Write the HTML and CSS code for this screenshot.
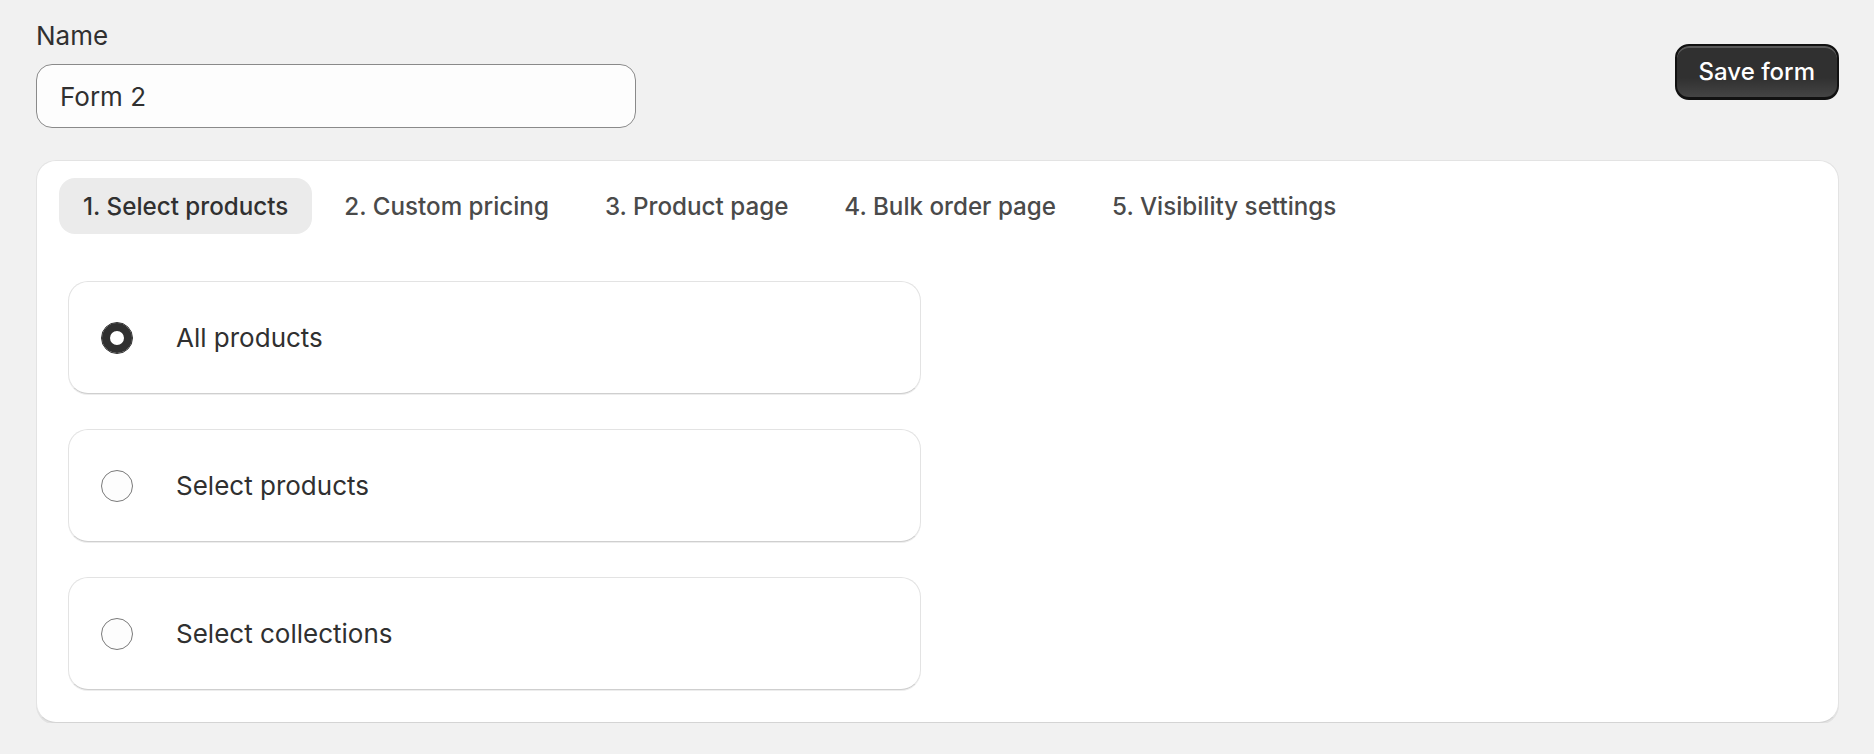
FILE: index.html
```html
<!DOCTYPE html>
<html lang="en">
<head>
  <meta charset="UTF-8" />
  <meta name="viewport" content="width=device-width, initial-scale=1.0"/>
  <title>Form 2</title>
  <link rel="stylesheet" href="styles.css">
</head>
<body>
  <div class="page">
    <header class="form-header">
      <div class="name-field">
        <label class="field-label" for="form-name">Name</label>
        <input type="text" id="form-name" class="text-input" value="Form 2" />
      </div>
      <button class="btn-primary">Save form</button>
    </header>

    <section class="card">
      <nav class="tabs">
        <button class="tab tab-active">1. Select products</button>
        <button class="tab">2. Custom pricing</button>
        <button class="tab">3. Product page</button>
        <button class="tab">4. Bulk order page</button>
        <button class="tab">5. Visibility settings</button>
      </nav>

      <div class="tab-panel">
        <label class="choice">
          <input type="radio" name="scope" value="all" checked />
          <span class="choice-label">All products</span>
        </label>
        <label class="choice">
          <input type="radio" name="scope" value="products" />
          <span class="choice-label">Select products</span>
        </label>
        <label class="choice">
          <input type="radio" name="scope" value="collections" />
          <span class="choice-label">Select collections</span>
        </label>
      </div>
    </section>
  </div>
</body>
</html>
```

FILE: styles.css
```css
body {
  margin: 0;
  background: #f1f1f1;
  font-family: Inter, "Noto Sans", sans-serif;
  color: #303030;
}

.page {
  padding: 16px 35px 0 36px;
}

.form-header {
  display: flex;
  justify-content: space-between;
  align-items: center;
}

.name-field {
  display: flex;
  flex-direction: column;
  gap: 8px;
}

.field-label {
  font-size: 26px;
  line-height: 40px;
}

.text-input {
  box-sizing: border-box;
  width: 600px;
  height: 64px;
  padding: 0 23px;
  font-family: inherit;
  font-size: 26px;
  color: #303030;
  background: #fdfdfd;
  border: 1px solid #8a8a8a;
  border-radius: 16px;
  outline: none;
}

.btn-primary {
  height: 56px;
  padding: 0 22px;
  font-family: inherit;
  font-size: 24px;
  font-weight: 500;
  color: #fff;
  background: linear-gradient(180deg, #303030 62%, #444 100%);
  border: 2px solid #111;
  border-bottom-width: 3px;
  border-radius: 14px;
  box-shadow: inset 0 2px 0 rgba(255, 255, 255, 0.2);
  cursor: pointer;
}

.card {
  margin-top: 32px;
  background: #fff;
  border: 1px solid #e3e3e3;
  border-bottom-color: #d4d4d4;
  border-radius: 20px;
  box-shadow: 0 2px 0 rgba(0, 0, 0, 0.06);
}

.tabs {
  display: flex;
  gap: 8px;
  padding: 17px 22px 0;
}

.tab {
  height: 56px;
  padding: 0 24px;
  font-family: inherit;
  font-size: 24.2px;
  font-weight: 500;
  color: #4a4a4a;
  background: none;
  border: none;
  border-radius: 16px;
  cursor: pointer;
}

.tab-active {
  color: #303030;
  background: #ebebeb;
}

.tab-panel {
  display: flex;
  flex-direction: column;
  gap: 35px;
  padding: 47px 31px 32px;
}

.choice {
  box-sizing: border-box;
  width: 853px;
  height: 113px;
  display: flex;
  align-items: center;
  gap: 43px;
  padding: 0 32px;
  border: 1px solid #e3e3e3;
  border-bottom-color: #cfcfcf;
  border-radius: 20px;
  box-shadow: 0 1px 0 rgba(0, 0, 0, 0.07);
  cursor: pointer;
}

.choice input {
  appearance: none;
  margin: 0;
  flex: none;
  width: 32px;
  height: 32px;
  border-radius: 50%;
  background: #fdfdfd;
  border: 1px solid #7a7a7a;
}

.choice input:checked {
  background: #fff;
  border-color: #303030;
  box-shadow: inset 0 0 0 8px #303030;
}

.choice-label {
  font-size: 26px;
  line-height: 40px;
}
```
